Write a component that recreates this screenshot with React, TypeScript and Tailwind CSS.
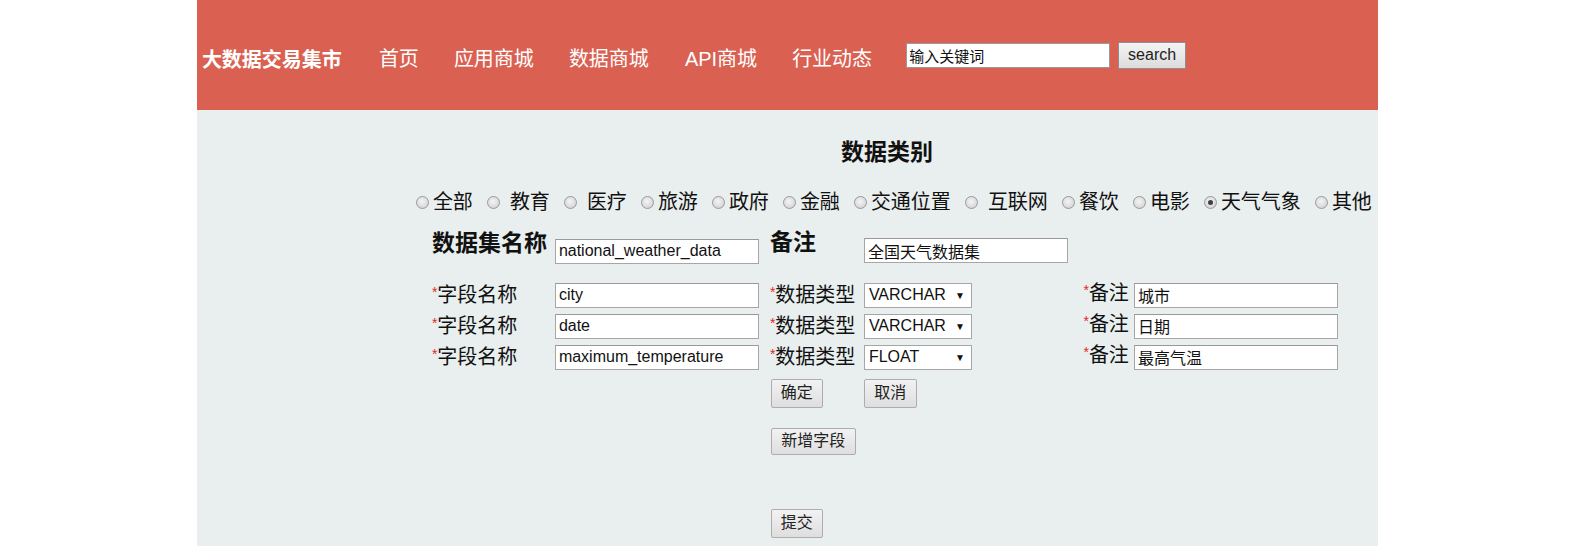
import React from 'react';

const cats: { name: string; sp?: boolean; on?: boolean }[] = [
  { name: '全部' },
  { name: '教育', sp: true },
  { name: '医疗', sp: true },
  { name: '旅游' },
  { name: '政府' },
  { name: '金融' },
  { name: '交通位置' },
  { name: '互联网', sp: true },
  { name: '餐饮' },
  { name: '电影' },
  { name: '天气气象', on: true },
  { name: '其他' },
];

const fields = [
  { name: 'city', type: 'VARCHAR', note: '城市' },
  { name: 'date', type: 'VARCHAR', note: '日期' },
  { name: 'maximum_temperature', type: 'FLOAT', note: '最高气温' },
];

const Radio = ({ on }: { on?: boolean }) => (
  <span className="w-[13px] h-[13px] shrink-0 rounded-full border border-[#9a9a9a] bg-[radial-gradient(circle_at_45%_40%,#f4f4f4_0%,#dcdcdc_60%,#c4c4c4_100%)] flex items-center justify-center">
    {on && <span className="w-[5px] h-[5px] rounded-full bg-[#3f3f3f]" />}
  </span>
);

const Btn = ({ children, w }: { children: React.ReactNode; w: string }) => (
  <button className={`${w} h-[29px] border border-[#adadad] rounded-[2px] bg-[linear-gradient(#f2f2f2,#dedede)] text-[16px] text-[#222] leading-none`}>
    {children}
  </button>
);

const Field = ({ value, w = 'w-[204px]' }: { value: string; w?: string }) => (
  <input
    readOnly
    value={value}
    className={`${w} h-[25px] bg-white border border-[#a6a6a6] border-t-[#999] px-[3px] text-[16px] text-[#111] outline-none`}
  />
);

const Label = ({ text }: { text: string }) => (
  <span className="text-[20px] text-[#111] leading-none">
    <span className="text-[#e0281f] text-[14px] align-top">*</span>
    {text}
  </span>
);

export default function App() {
  return (
    <div className="h-[546px] overflow-hidden bg-white font-['Liberation_Sans','Noto_Sans_CJK_SC',sans-serif]">
      <div className="mx-auto w-3/4 h-[546px] bg-[#e9eeee]">
        <header className="h-[110px] bg-[#da6152] flex items-center pl-[5px]">
          <span className="text-white text-[20px] font-bold mt-[9px]">大数据交易集市</span>
          <nav className="flex gap-[35px] ml-[37px] mt-[7px] text-white text-[20px]">
            <a>首页</a>
            <a>应用商城</a>
            <a className="mr-[1px]">数据商城</a>
            <a>API商城</a>
            <a>行业动态</a>
          </nav>
          <input
            readOnly
            value="输入关键词"
            className="ml-[34px] w-[204px] h-[25px] bg-white border border-[#9a9a9a] px-[2px] text-[15px] text-[#111] outline-none"
          />
          <button className="ml-[8px] w-[68px] h-[27px] border border-[#8f8f8f] bg-[linear-gradient(#f4f4f4,#dcdcdc)] text-[16px] text-[#222] leading-none">
            search
          </button>
        </header>

        <main className="pl-[219px] pt-[27px]">
          <h2 className="w-[942px] text-center text-[23px] font-bold text-[#111] leading-[30px]">数据类别</h2>

          <div className="mt-[20px] flex items-center gap-[14px] h-[30px] text-[20px] text-[#111] whitespace-nowrap">
            {cats.map(c => (
              <label key={c.name} className="flex items-center">
                <Radio on={c.on} />
                <span className={c.sp ? 'ml-[10px]' : 'ml-[4px]'}>{c.name}</span>
              </label>
            ))}
          </div>

          <div className="pl-[16px] mt-[12px] grid grid-cols-[123px_215px_94px_217px_53px_204px] items-center">
            <span className="text-[23px] font-bold text-[#111] leading-none self-start mt-[3px]">数据集名称</span>
            <span className="mt-[9px]"><Field value="national_weather_data" /></span>
            <span className="text-[23px] font-bold text-[#111] leading-none self-start mt-[2px]">备注</span>
            <span className="mt-[9px] col-span-3"><Field value="全国天气数据集" /></span>
          </div>

          <div className="pl-[16px] mt-[18px] grid grid-cols-[123px_215px_94px_217px_53px_204px] gap-y-[6px] items-center">
            {fields.map(f => (
              <React.Fragment key={f.name}>
                <Label text="字段名称" />
                <Field value={f.name} />
                <Label text="数据类型" />
                <div className="w-[108px] h-[25px] bg-white border border-[#a6a6a6] flex items-center justify-between pl-[4px] pr-[6px] text-[16px] text-[#111]">
                  <span>{f.type}</span>
                  <span className="text-[10px]">▼</span>
                </div>
                <span className="justify-self-end pr-[5px]"><Label text="备注" /></span>
                <Field value={f.note} />
              </React.Fragment>
            ))}
          </div>

          <div className="pl-[355px] mt-[9px] flex flex-col items-start">
            <div className="flex">
              <Btn w="w-[52px]">确定</Btn>
              <span className="ml-[41px]"><Btn w="w-[53px]">取消</Btn></span>
            </div>
            <div className="mt-[20px]"><Btn w="w-[85px] !h-[27px]">新增字段</Btn></div>
            <div className="mt-[54px]"><Btn w="w-[52px]">提交</Btn></div>
          </div>
        </main>
      </div>
    </div>
  );
}
